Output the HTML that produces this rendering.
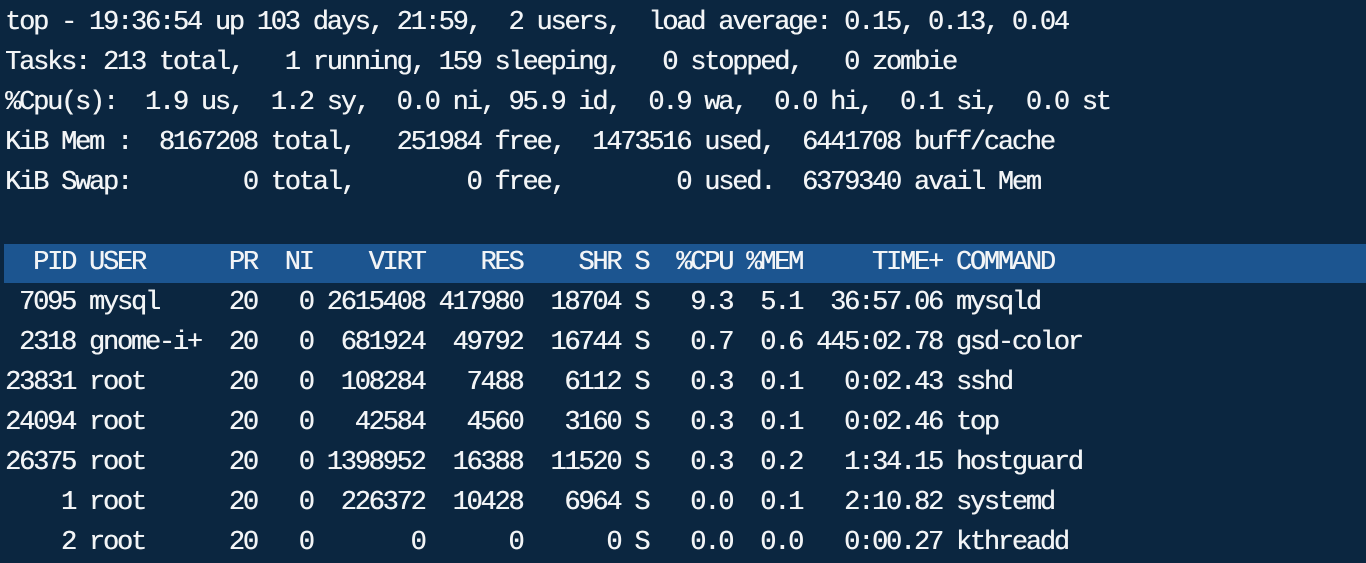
<!DOCTYPE html>
<html><head><meta charset="utf-8"><style>
html,body{margin:0;padding:0;width:1366px;height:560px;overflow:hidden;background:#0b2640;}
pre{margin:0;position:absolute;left:5px;top:3px;font-family:"Liberation Mono",monospace;font-size:27px;letter-spacing:-2.22px;line-height:40px;color:#f2f4f6;white-space:pre;text-shadow:0.4px 0 0 #f2f4f6;}
.bar{position:absolute;left:4px;top:244px;width:1362px;height:39px;background:#1c5590;}
</style></head><body>
<div class="bar"></div>
<pre>top - 19:36:54 up 103 days, 21:59,  2 users,  load average: 0.15, 0.13, 0.04
Tasks: 213 total,   1 running, 159 sleeping,   0 stopped,   0 zombie
%Cpu(s):  1.9 us,  1.2 sy,  0.0 ni, 95.9 id,  0.9 wa,  0.0 hi,  0.1 si,  0.0 st
KiB Mem :  8167208 total,   251984 free,  1473516 used,  6441708 buff/cache
KiB Swap:        0 total,        0 free,        0 used.  6379340 avail Mem

  PID USER      PR  NI    VIRT    RES    SHR S  %CPU %MEM     TIME+ COMMAND
 7095 mysql     20   0 2615408 417980  18704 S   9.3  5.1  36:57.06 mysqld
 2318 gnome-i+  20   0  681924  49792  16744 S   0.7  0.6 445:02.78 gsd-color
23831 root      20   0  108284   7488   6112 S   0.3  0.1   0:02.43 sshd
24094 root      20   0   42584   4560   3160 S   0.3  0.1   0:02.46 top
26375 root      20   0 1398952  16388  11520 S   0.3  0.2   1:34.15 hostguard
    1 root      20   0  226372  10428   6964 S   0.0  0.1   2:10.82 systemd
    2 root      20   0       0      0      0 S   0.0  0.0   0:00.27 kthreadd</pre>
</body></html>
